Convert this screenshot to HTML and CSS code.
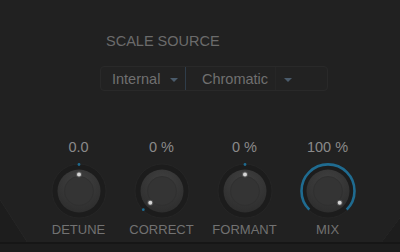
FILE: index.html
```html
<!DOCTYPE html>
<html lang="en">
<head>
    <meta charset="UTF-8">
    <title>Pitch Correct</title>
    <link rel="stylesheet" href="styles.css">
</head>
<body>
    <div class="plugin">
        <div class="scaleSource">
            <h2 class="sectionTitle">SCALE SOURCE</h2>
            <div class="dropdown">
                <div class="seg seg-source">
                    <span class="segText">Internal</span>
                    <span class="arrow"></span>
                </div>
                <div class="seg seg-scale">
                    <span class="segText">Chromatic</span>
                </div>
                <div class="seg seg-btn">
                    <span class="arrow"></span>
                </div>
            </div>
        </div>

        <div class="knobs">
            <div class="knob">
                <span class="value">0.0</span>
                <svg class="dial" width="60" height="60" viewBox="0 0 60 60">
                    <defs>
                        <radialGradient id="cap1" cx="50%" cy="30%" r="70%">
                            <stop offset="0" stop-color="#404040"/>
                            <stop offset="1" stop-color="#2e2e2e"/>
                        </radialGradient>
                    </defs>
                    <circle cx="30" cy="30" r="27" fill="#1c1c1c" stroke="#252525" stroke-width="1"/>
                    <circle cx="30" cy="30" r="21.5" fill="url(#cap1)"/>
                    <circle cx="30" cy="30" r="14.5" fill="#343434" stroke="#303030" stroke-width="1"/>
                    <circle cx="30" cy="3.5" r="1.4" fill="#1f6b90"/>
                    <circle cx="30" cy="13.5" r="3" fill="#ffffff" opacity="0.15"/>
                    <circle cx="30" cy="13.5" r="2" fill="#d6d6d6"/>
                </svg>
                <span class="label">DETUNE</span>
            </div>
            <div class="knob">
                <span class="value">0 %</span>
                <svg class="dial" width="60" height="60" viewBox="0 0 60 60">
                    <defs>
                        <radialGradient id="cap2" cx="50%" cy="30%" r="70%">
                            <stop offset="0" stop-color="#404040"/>
                            <stop offset="1" stop-color="#2e2e2e"/>
                        </radialGradient>
                    </defs>
                    <circle cx="30" cy="30" r="27" fill="#1c1c1c" stroke="#252525" stroke-width="1"/>
                    <circle cx="30" cy="30" r="21.5" fill="url(#cap2)"/>
                    <circle cx="30" cy="30" r="14.5" fill="#343434" stroke="#303030" stroke-width="1"/>
                    <circle cx="11.3" cy="48.7" r="1.4" fill="#1f6b90"/>
                    <circle cx="18.3" cy="41.7" r="3" fill="#ffffff" opacity="0.15"/>
                    <circle cx="18.3" cy="41.7" r="2" fill="#d6d6d6"/>
                </svg>
                <span class="label">CORRECT</span>
            </div>
            <div class="knob">
                <span class="value">0 %</span>
                <svg class="dial" width="60" height="60" viewBox="0 0 60 60">
                    <defs>
                        <radialGradient id="cap3" cx="50%" cy="30%" r="70%">
                            <stop offset="0" stop-color="#404040"/>
                            <stop offset="1" stop-color="#2e2e2e"/>
                        </radialGradient>
                    </defs>
                    <circle cx="30" cy="30" r="27" fill="#1c1c1c" stroke="#252525" stroke-width="1"/>
                    <circle cx="30" cy="30" r="21.5" fill="url(#cap3)"/>
                    <circle cx="30" cy="30" r="14.5" fill="#343434" stroke="#303030" stroke-width="1"/>
                    <circle cx="30" cy="3.5" r="1.4" fill="#1f6b90"/>
                    <circle cx="30" cy="13.5" r="3" fill="#ffffff" opacity="0.15"/>
                    <circle cx="30" cy="13.5" r="2" fill="#d6d6d6"/>
                </svg>
                <span class="label">FORMANT</span>
            </div>
            <div class="knob">
                <span class="value">100 %</span>
                <svg class="dial" width="60" height="60" viewBox="0 0 60 60">
                    <defs>
                        <radialGradient id="cap4" cx="50%" cy="30%" r="70%">
                            <stop offset="0" stop-color="#404040"/>
                            <stop offset="1" stop-color="#2e2e2e"/>
                        </radialGradient>
                    </defs>
                    <circle cx="30" cy="30" r="27" fill="#1c1c1c" stroke="#252525" stroke-width="1"/>
                    <path d="M11.3 48.7 A26.5 26.5 0 1 1 48.7 48.7" fill="none" stroke="#1f6b90" stroke-width="2.6"/>
                    <circle cx="30" cy="30" r="21.5" fill="url(#cap4)"/>
                    <circle cx="30" cy="30" r="14.5" fill="#343434" stroke="#303030" stroke-width="1"/>
                    <circle cx="41.7" cy="41.7" r="3" fill="#ffffff" opacity="0.15"/>
                    <circle cx="41.7" cy="41.7" r="2" fill="#d6d6d6"/>
                </svg>
                <span class="label">MIX</span>
            </div>
        </div>

        <div class="footer"></div>
    </div>
</body>
</html>
```

FILE: styles.css
```css
*{
    margin: 0;
    padding: 0;
    box-sizing: border-box;
}
body{
    background-color: #212121;
    font-family: "Liberation Sans", Arial, sans-serif;
    width: 400px;
    height: 252px;
    overflow: hidden;
}
.plugin{
    height: 252px;
    display: flex;
    flex-direction: column;
    background:
        linear-gradient(to top right, #1d1d1d 49%, #252525 50%, transparent 52%) left 0 bottom 10px / 27px 42px no-repeat,
        linear-gradient(to top left, #1d1d1d 49%, #252525 50%, transparent 52%) right 0 bottom 10px / 18px 24px no-repeat,
        #212121;
}
.scaleSource{
    padding: 33px 0 0 100px;
}
.sectionTitle{
    font-size: 14.5px;
    line-height: 17px;
    font-weight: normal;
    color: #6b6b6b;
    margin-left: 6px;
}
.dropdown{
    margin-top: 16px;
    width: 228px;
    height: 25px;
    display: flex;
    border: 1px solid #292929;
    border-radius: 4px;
    background-color: #222222;
}
.seg{
    display: flex;
    align-items: center;
    height: 100%;
}
.segText{
    font-size: 14.5px;
    color: #707070;
    margin-top: 1px;
}
.seg-source{
    width: 85px;
    padding-left: 11px;
    border-right: 1px solid #2f3d4a;
}
.seg-source .arrow{
    margin-left: 10px;
}
.seg-scale{
    width: 90px;
    padding-left: 16px;
    border-right: 1px solid #262626;
}
.seg-btn{
    padding-left: 8px;
}
.arrow{
    width: 0;
    height: 0;
    border-left: 4px solid transparent;
    border-right: 4px solid transparent;
    border-top: 4px solid #4a5b6b;
    margin-top: 2px;
}
.knobs{
    margin-top: 48px;
    padding-left: 37px;
    display: grid;
    grid-template-columns: repeat(4, 83px);
}
.knob{
    display: flex;
    flex-direction: column;
    align-items: center;
}
.value{
    font-size: 14.5px;
    line-height: 17px;
    color: #8a8a8a;
}
.dial{
    display: block;
    margin-top: 5px;
}
.label{
    font-size: 13px;
    line-height: 15px;
    color: #727272;
    margin-top: 1px;
}
.footer{
    margin-top: auto;
    height: 10px;
    background-color: #1d1d1d;
    border-top: 2px solid #161616;
}
```
